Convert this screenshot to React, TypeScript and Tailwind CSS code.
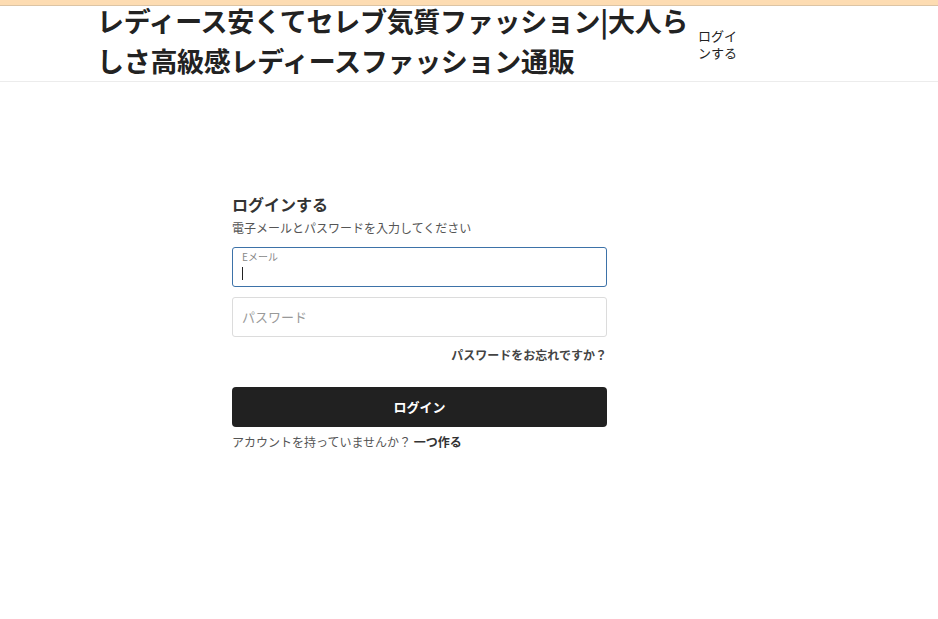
export default function App() {
    return (
        <div className="min-h-[619px] bg-white text-[#222] font-['Noto_Sans_CJK_JP','Liberation_Sans',sans-serif]">
            {/* top strip */}
            <div className="h-[6px] bg-[#fddcb2] border-b border-[#dcc4a4]" />

            {/* header */}
            <header className="h-[76px] border-b border-[#ececec]">
                <div className="flex items-center pl-[97px] h-full">
                    <h1 className="w-[600px] shrink-0 text-[27px] leading-[40px] font-bold tracking-[-0.3px] text-[#222] -mt-[6px]">
                        レディース安くてセレブ気質ファッション|大人らしさ高級感レディースファッション通販
                    </h1>
                    <a href="#" className="w-[42px] ml-[1px] text-[13px] leading-[17px] text-[#222]">
                        ログインする
                    </a>
                </div>
            </header>

            {/* login form */}
            <main className="pt-[110px] pl-[232px]">
                <div className="w-[375px]">
                    <h2 className="text-[16px] leading-[24px] font-bold text-[#333]">ログインする</h2>
                    <p className="text-[12px] leading-[18px] text-[#555] mt-[3px]">電子メールとパスワードを入力してください</p>

                    <div className="mt-[10px] h-[40px] rounded-[3px] border border-[#3d72a8] px-[9px] pt-[2px]">
                        <div className="text-[10px] leading-[14px] text-[#888]">Eメール</div>
                        <div className="mt-[3px] w-[1px] h-[13px] bg-[#222]" />
                    </div>

                    <div className="mt-[10px] h-[40px] rounded-[3px] border border-[#dcdcdc] px-[9px] flex items-center">
                        <span className="text-[13px] text-[#999]">パスワード</span>
                    </div>

                    <div className="mt-[9px] text-right text-[12px] leading-[18px] font-bold text-[#444]">
                        パスワードをお忘れですか？
                    </div>

                    <button className="mt-[23px] w-full h-[40px] rounded-[4px] bg-[#212121] text-white text-[13px] font-bold">
                        ログイン
                    </button>

                    <p className="mt-[6px] text-[12px] leading-[18px] text-[#555]">
                        アカウントを持っていませんか？ <span className="font-bold text-[#333]">一つ作る</span>
                    </p>
                </div>
            </main>
        </div>
    );
}
